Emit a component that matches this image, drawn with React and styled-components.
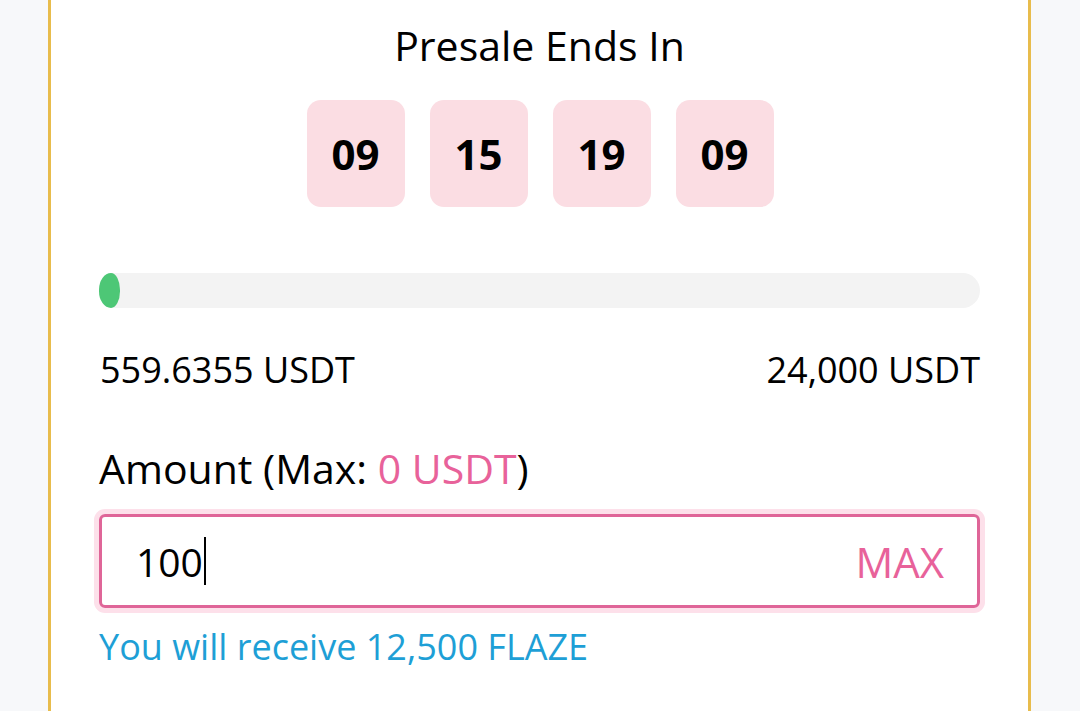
import React from "react";
import styled, { createGlobalStyle } from "styled-components";

const Global = createGlobalStyle`
  html, body { margin: 0; padding: 0; background: #f7f8fa; }
  body { font-family: "Open Sans", "Noto Sans", sans-serif; color: #000; }
`;

const Page = styled.div`
  height: 711px;
  overflow: hidden;
  padding: 0 49px 0 48px;
  display: flex;
`;

const Card = styled.section`
  flex: 1;
  background: #fff;
  border-left: 3px solid #e8bc4c;
  border-right: 3px solid #e8bc4c;
  padding: 19px 48px 0 48px;
  display: flex;
  flex-direction: column;
`;

const Title = styled.h2`
  margin: 0;
  text-align: center;
  font-size: 41px;
  font-weight: 400;
  line-height: 52px;
`;

const Countdown = styled.div`
  display: flex;
  justify-content: center;
  gap: 25px;
  margin-top: 29px;
  padding-left: 1px;
`;

const TimeBox = styled.div`
  width: 98px;
  height: 107px;
  border-radius: 14px;
  background: #fbdde3;
  display: flex;
  align-items: center;
  justify-content: center;
  font-size: 42px;
  font-weight: 700;
`;

const Track = styled.div`
  margin-top: 66px;
  height: 35px;
  border-radius: 18px;
  background: #f3f3f3;
  display: flex;
  align-items: stretch;
`;

const Fill = styled.div`
  background: #4dc776;
  border-radius: 60% 45% 45% 60% / 50%;
  min-width: 21px;
`;

const Totals = styled.div`
  display: flex;
  justify-content: space-between;
  margin-top: 40px;
  font-size: 36px;
  line-height: 44px;
  padding-left: 1px;
`;

const Label = styled.div`
  margin-top: 50px;
  font-size: 41px;
  line-height: 52px;
`;

const Accent = styled.span`
  color: #e8629a;
`;

const InputWrap = styled.div`
  margin-top: 20px;
  height: 88px;
  border: 3px solid #df6598;
  border-radius: 6px;
  box-shadow: 0 0 0 5px #fde0ea;
  display: flex;
  align-items: center;
  justify-content: space-between;
  padding: 0 33px 0 34px;
`;

const Value = styled.span`
  font-size: 39px;
  display: flex;
  align-items: center;
`;

const Caret = styled.span`
  display: inline-block;
  width: 2px;
  height: 48px;
  background: #000;
  margin-left: 1px;
`;

const MaxButton = styled.button`
  border: none;
  background: none;
  padding: 0;
  font-family: inherit;
  font-size: 42px;
  color: #e8629a;
  cursor: pointer;
`;

const Receive = styled.div`
  margin-top: 17px;
  font-size: 36px;
  line-height: 44px;
  color: #1e9fd6;
`;

export default function App() {
  const time = ["09", "15", "19", "09"];
  const raised = 559.6355;
  const goal = 24000;
  const pct = (raised / goal) * 100;
  return (
    <>
      <Global />
      <Page>
        <Card>
          <Title>Presale Ends In</Title>
          <Countdown>
            {time.map((t, i) => (
              <TimeBox key={i}>{t}</TimeBox>
            ))}
          </Countdown>
          <Track>
            <Fill style={{ width: `${pct}%` }} />
          </Track>
          <Totals>
            <span>559.6355 USDT</span>
            <span>24,000 USDT</span>
          </Totals>
          <Label>
            Amount (Max: <Accent>0 USDT</Accent>)
          </Label>
          <InputWrap>
            <Value>
              100
              <Caret />
            </Value>
            <MaxButton>MAX</MaxButton>
          </InputWrap>
          <Receive>You will receive 12,500 FLAZE</Receive>
        </Card>
      </Page>
    </>
  );
}
